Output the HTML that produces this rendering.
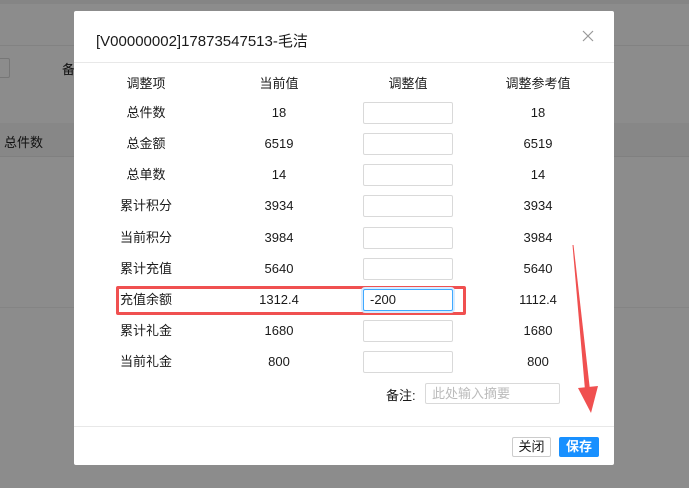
<!DOCTYPE html>
<html><head><meta charset="utf-8"><style>
*{margin:0;padding:0;box-sizing:border-box}
body{width:689px;height:488px;overflow:hidden;background:#8c8c8c;position:relative;font-family:"Liberation Sans","Noto Sans CJK SC",sans-serif;font-size:13px;color:#1a1a1a}
.a{position:absolute}
.modal{position:absolute;left:74px;top:11px;width:540px;height:454px;background:#fff;border-radius:2px}
.t{position:absolute;left:22px;top:19px;font-size:15px;color:#1a1a1a}
.hd{position:absolute;left:0;right:0;top:51px;border-top:1px solid #e8e8e8}
.ft{position:absolute;left:0;right:0;top:415px;border-top:1px solid #e8e8e8}
.c{position:absolute;width:120px;text-align:center;transform:translateY(-50%);line-height:18px}
.in{position:absolute;left:289px;width:90px;height:22px;border:1px solid #d9d9d9;border-radius:2px;background:#fff}
</style></head><body>
<div class="a" style="left:0;top:0;width:689px;height:4px;background:#858585"></div>
<div class="a" style="left:0;top:45px;width:689px;border-top:1px solid #828282"></div>
<div class="a" style="left:0;top:123px;width:689px;height:34px;background:#878787;border-bottom:1px solid #808080"></div>
<div class="a" style="left:0;top:307px;width:689px;border-top:1px solid #848484"></div>
<div class="a" style="left:-4px;top:58px;width:14px;height:20px;border:1px solid #777;border-radius:2px"></div>
<div class="a" style="left:62px;top:59px;font-size:13px;color:#111">备</div>
<div class="a" style="left:4px;top:132px;font-size:13px;color:#111">总件数</div>
<div class="modal">
<div class="t">[V00000002]17873547513-毛洁</div>
<svg class="a" style="left:508px;top:19px" width="12" height="12"><path d="M1 1L11 11M11 1L1 11" stroke="#999" stroke-width="1.2"/></svg>
<div class="hd"></div>
<div class="a" style="left:42px;top:275px;width:350px;height:29px;border:3px solid #f05050;border-radius:2px"></div>
<div id="rows"></div>
<div class="a" style="left:312px;top:374px">备注:</div>
<div class="a" style="left:351px;top:372px;width:135px;height:21px;border:1px solid #d9d9d9;border-radius:2px;color:#bbb;padding-left:6px;line-height:19px">此处输入摘要</div>
<div class="ft"></div>
<div class="a" style="left:438px;top:426px;width:39px;height:20px;border:1px solid #ccc;border-radius:2px;text-align:center;line-height:18px">关闭</div>
<div class="a" style="left:485px;top:426px;width:40px;height:20px;background:#1890ff;color:#fff;border-radius:2px;text-align:center;line-height:20px;font-weight:bold">保存</div>
</div>
<svg class="a" style="left:0;top:0" width="689" height="488"><polygon points="572.5,245 573.5,245 590,390 585,390" fill="#f05050"/><polygon points="578,388 598,386 591,413" fill="#f05050"/></svg>
<script>
var d=[["调整项","当前值","调整值","调整参考值"],["总件数","18","","18"],["总金额","6519","","6519"],["总单数","14","","14"],["累计积分","3934","","3934"],["当前积分","3984","","3984"],["累计充值","5640","","5640"],["充值余额","1312.4","-200","1112.4"],["累计礼金","1680","","1680"],["当前礼金","800","","800"]];
var ys=[73,102,133,164,195,227,258,289,320,351],h="";
var xs=[72,205,334,464];
d.forEach(function(r,i){var y=ys[i];
[0,1,3].forEach(function(j){h+='<div class="c" style="left:'+(xs[j]-60)+'px;top:'+y+'px">'+r[j]+'</div>'});
if(i==0)h+='<div class="c" style="left:'+(xs[2]-60)+'px;top:'+y+'px">'+r[2]+'</div>';
else h+='<div class="in" style="top:'+(y-11)+'px;'+(i==7?'border-color:#40a9ff;box-shadow:0 0 0 2px #d6ebff;padding-left:6px;line-height:20px':'')+'">'+r[2]+'</div>';});
document.getElementById('rows').innerHTML=h;
</script>
</body></html>
